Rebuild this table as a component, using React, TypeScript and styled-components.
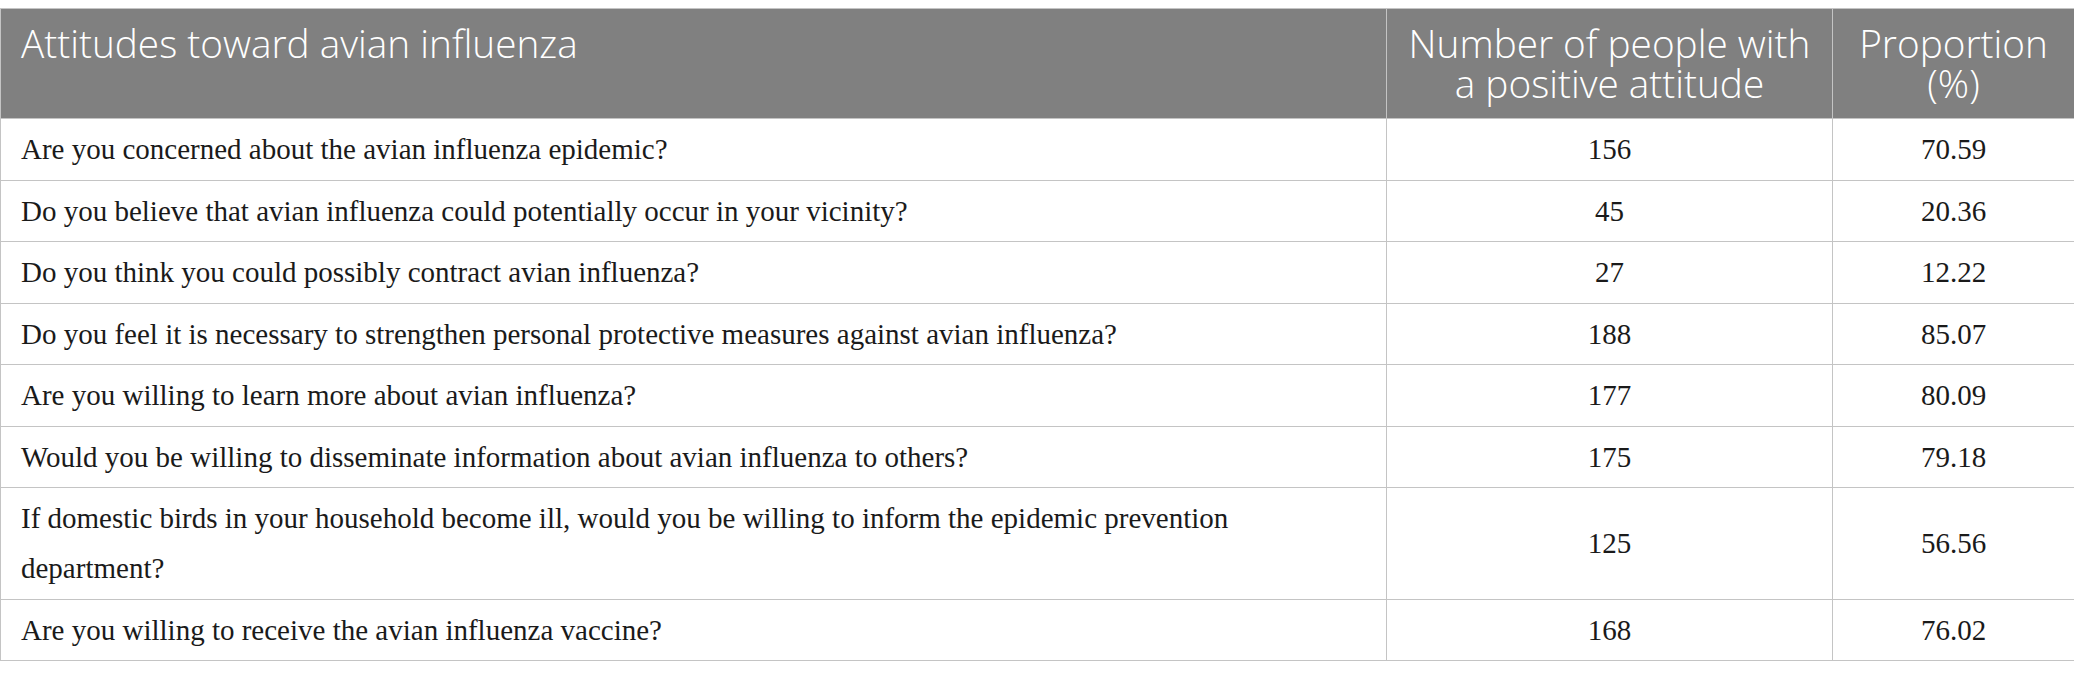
import React from "react";
import styled, { createGlobalStyle } from "styled-components";

const GlobalStyle = createGlobalStyle`
  html, body {
    margin: 0;
    padding: 0;
    background: #ffffff;
  }
`;

const Page = styled.div`
  padding-top: 8px;
  width: 2074px;
`;

const Table = styled.table`
  width: 2074px;
  border-collapse: collapse;
  table-layout: fixed;
  border: 1px solid #c4c4c4;
`;

const HeadCell = styled.th<{ $align?: "left" | "center" }>`
  background: #808080;
  color: #ffffff;
  font-family: "Open Sans", "Lato", sans-serif;
  font-weight: 300;
  font-size: 38.75px;
  line-height: 40px;
  text-align: ${(p) => p.$align ?? "center"};
  vertical-align: top;
  padding: 14px 20px 15px;
  border: 1px solid #c4c4c4;
`;

const Cell = styled.td<{ $align?: "left" | "center" }>`
  font-family: "Liberation Serif", "Times New Roman", serif;
  font-size: 29px;
  line-height: 50px;
  color: #1a1a1a;
  text-align: ${(p) => p.$align ?? "left"};
  vertical-align: middle;
  padding: 5.25px 20px;
  border: 1px solid #c4c4c4;
`;

const rows: [string, string, string][] = [
  ["Are you concerned about the avian influenza epidemic?", "156", "70.59"],
  ["Do you believe that avian influenza could potentially occur in your vicinity?", "45", "20.36"],
  ["Do you think you could possibly contract avian influenza?", "27", "12.22"],
  ["Do you feel it is necessary to strengthen personal protective measures against avian influenza?", "188", "85.07"],
  ["Are you willing to learn more about avian influenza?", "177", "80.09"],
  ["Would you be willing to disseminate information about avian influenza to others?", "175", "79.18"],
  ["If domestic birds in your household become ill, would you be willing to inform the epidemic prevention department?", "125", "56.56"],
  ["Are you willing to receive the avian influenza vaccine?", "168", "76.02"],
];

export default function App() {
  return (
    <Page>
      <GlobalStyle />
      <Table>
        <colgroup>
          <col style={{ width: 1386 }} />
          <col style={{ width: 446 }} />
          <col style={{ width: 242 }} />
        </colgroup>
        <thead>
          <tr>
            <HeadCell $align="left">Attitudes toward avian influenza</HeadCell>
            <HeadCell>Number of people with a positive attitude</HeadCell>
            <HeadCell>Proportion (%)</HeadCell>
          </tr>
        </thead>
        <tbody>
          {rows.map(([q, n, p]) => (
            <tr key={q}>
              <Cell>{q}</Cell>
              <Cell $align="center">{n}</Cell>
              <Cell $align="center">{p}</Cell>
            </tr>
          ))}
        </tbody>
      </Table>
    </Page>
  );
}
